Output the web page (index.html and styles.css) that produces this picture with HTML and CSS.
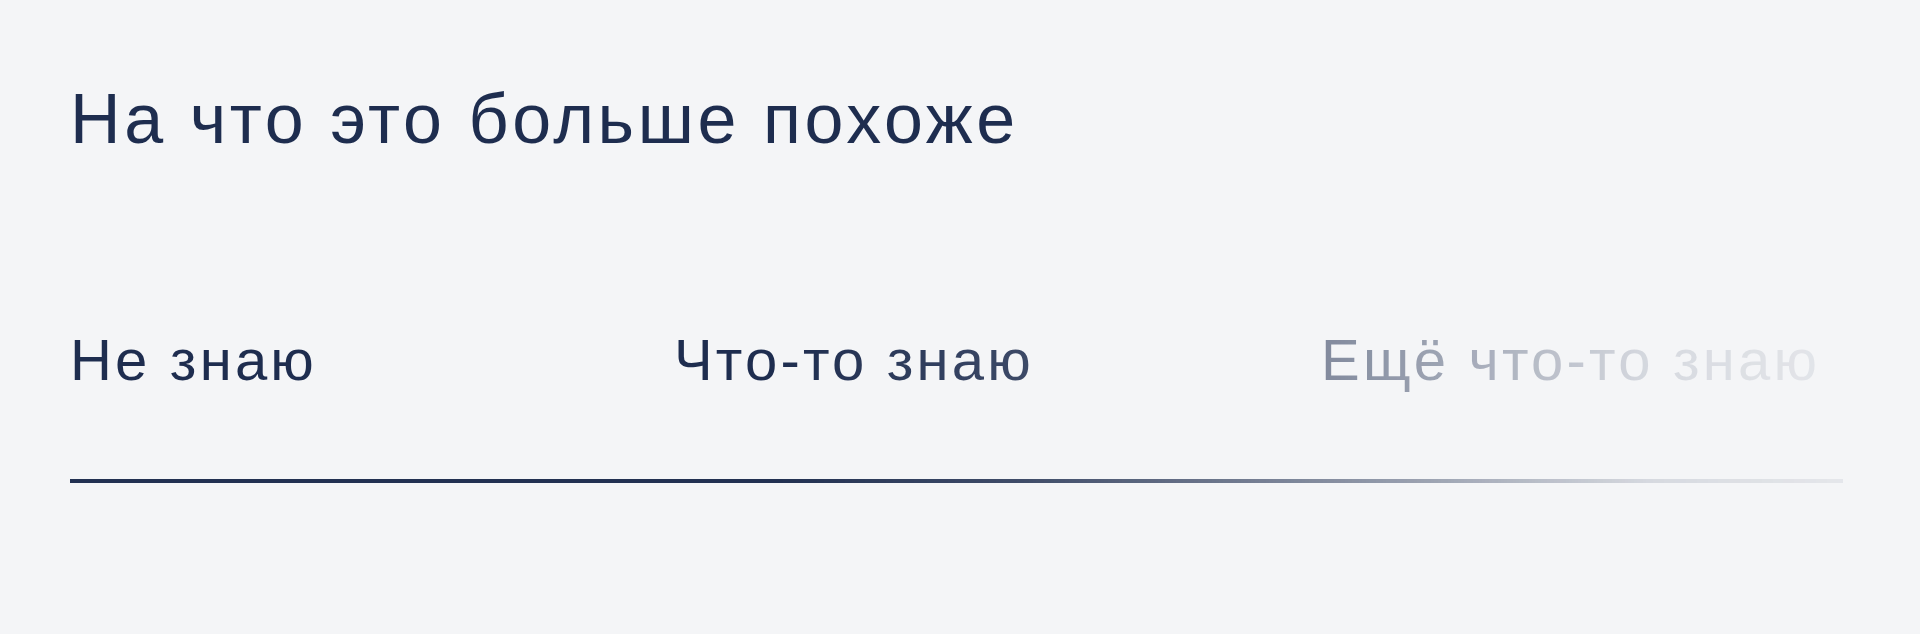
FILE: index.html
```html
<!DOCTYPE html>
<html lang="ru">
<head>
    <meta charset="UTF-8">
    <meta name="viewport" content="width=device-width, initial-scale=1.0">
    <title>На что это больше похоже</title>
    <link rel="stylesheet" href="styles.css">
</head>
<body>

<div class="quiz">
    <h2 class="question">На что это больше похоже</h2>

    <div class="answers">
        <div class="options">
            <button class="option">Не знаю</button>
            <button class="option">Что-то знаю</button>
            <button class="option">Ещё что-то знаю</button>
        </div>
        <div class="track"></div>
    </div>
</div>

</body>
</html>
```

FILE: styles.css
```css
* {
    box-sizing: border-box;
    margin: 0;
    padding: 0;
}
body {
    font-family: 'Liberation Sans', Arial, sans-serif;
    background-color: #f4f5f7;
    color: #1e2d4f;
    min-height: 100vh;
}
.quiz {
    padding: 84px 77px 0 70px;
}
.question {
    font-size: 70px;
    font-weight: normal;
    line-height: 1;
    letter-spacing: 3.6px;
}
.answers {
    margin-top: 177px;
    /* options and track fade out towards the right edge */
    -webkit-mask-image: linear-gradient(to right, #000 40%, rgba(0, 0, 0, 0.86) 54%, rgba(0, 0, 0, 0.49) 73%, rgba(0, 0, 0, 0.39) 78%, rgba(0, 0, 0, 0.14) 89%, rgba(0, 0, 0, 0.07) 100%);
    mask-image: linear-gradient(to right, #000 40%, rgba(0, 0, 0, 0.86) 54%, rgba(0, 0, 0, 0.49) 73%, rgba(0, 0, 0, 0.39) 78%, rgba(0, 0, 0, 0.14) 89%, rgba(0, 0, 0, 0.07) 100%);
}
.options {
    display: grid;
    grid-template-columns: 604px 647px 1fr;
}
.option {
    background: none;
    border: none;
    color: inherit;
    font-family: inherit;
    font-size: 58px;
    line-height: 1;
    letter-spacing: 3.2px;
    text-align: left;
    cursor: pointer;
    white-space: nowrap;
}
.track {
    height: 4px;
    margin-top: 90px;
    background-color: #223152;
}
```
